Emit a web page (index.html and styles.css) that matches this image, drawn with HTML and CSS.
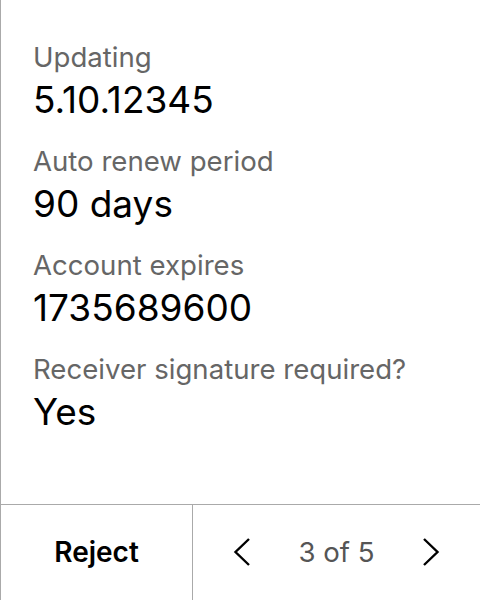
FILE: index.html
```html
<!DOCTYPE html>
<html>
<head>
<meta charset="utf-8">
<link rel="stylesheet" href="styles.css">
</head>
<body>
<div class="panel">
  <div class="fields">
    <div class="field">
      <div class="label">Updating</div>
      <div class="value">5.10.12345</div>
    </div>
    <div class="field">
      <div class="label">Auto renew period</div>
      <div class="value">90 days</div>
    </div>
    <div class="field">
      <div class="label">Account expires</div>
      <div class="value">1735689600</div>
    </div>
    <div class="field">
      <div class="label">Receiver signature required?</div>
      <div class="value">Yes</div>
    </div>
  </div>
  <div class="footer">
    <button class="reject">Reject</button>
    <div class="pager">
      <button class="nav" aria-label="Previous">
        <svg width="32" height="32" viewBox="0 0 32 32"><path d="M22 3 L8.5 16 L22 29" fill="none" stroke="#000" stroke-width="2.4"/></svg>
      </button>
      <span class="count">3 of 5</span>
      <button class="nav" aria-label="Next">
        <svg width="32" height="32" viewBox="0 0 32 32"><path d="M10 3 L23.5 16 L10 29" fill="none" stroke="#000" stroke-width="2.4"/></svg>
      </button>
    </div>
  </div>
</div>
</body>
</html>
```

FILE: styles.css
```css
html, body {
  margin: 0;
  padding: 0;
  background: #fff;
}
body {
  font-family: Inter, "Noto Sans", sans-serif;
  width: 480px;
  height: 600px;
  overflow: hidden;
}
.panel {
  box-sizing: border-box;
  height: 600px;
  border-left: 1px solid #aaaaaa;
  display: flex;
  flex-direction: column;
}
.fields {
  flex: 1;
  padding: 38px 0 0 32px;
  display: flex;
  flex-direction: column;
  gap: 18px;
}
.field {
  display: flex;
  flex-direction: column;
}
.label {
  font-size: 27.6px;
  line-height: 38px;
  color: #666666;
}
.value {
  font-size: 37px;
  line-height: 48px;
  color: #000;
}
.footer {
  height: 96px;
  border-top: 1px solid #aaaaaa;
  display: flex;
  box-sizing: border-box;
}
.reject {
  width: 192px;
  border: none;
  border-right: 1px solid #aaaaaa;
  background: none;
  font-family: inherit;
  font-size: 28px;
  font-weight: 600;
  color: #000;
  padding: 0 0 2px;
}
.pager {
  flex: 1;
  display: flex;
  align-items: center;
  justify-content: center;
  gap: 31px;
  padding-bottom: 2px;
}
.nav {
  width: 48px;
  height: 48px;
  border: none;
  background: none;
  padding: 0;
  display: flex;
  align-items: center;
  justify-content: center;
}
.count {
  font-size: 27.6px;
  color: #555555;
}
```
